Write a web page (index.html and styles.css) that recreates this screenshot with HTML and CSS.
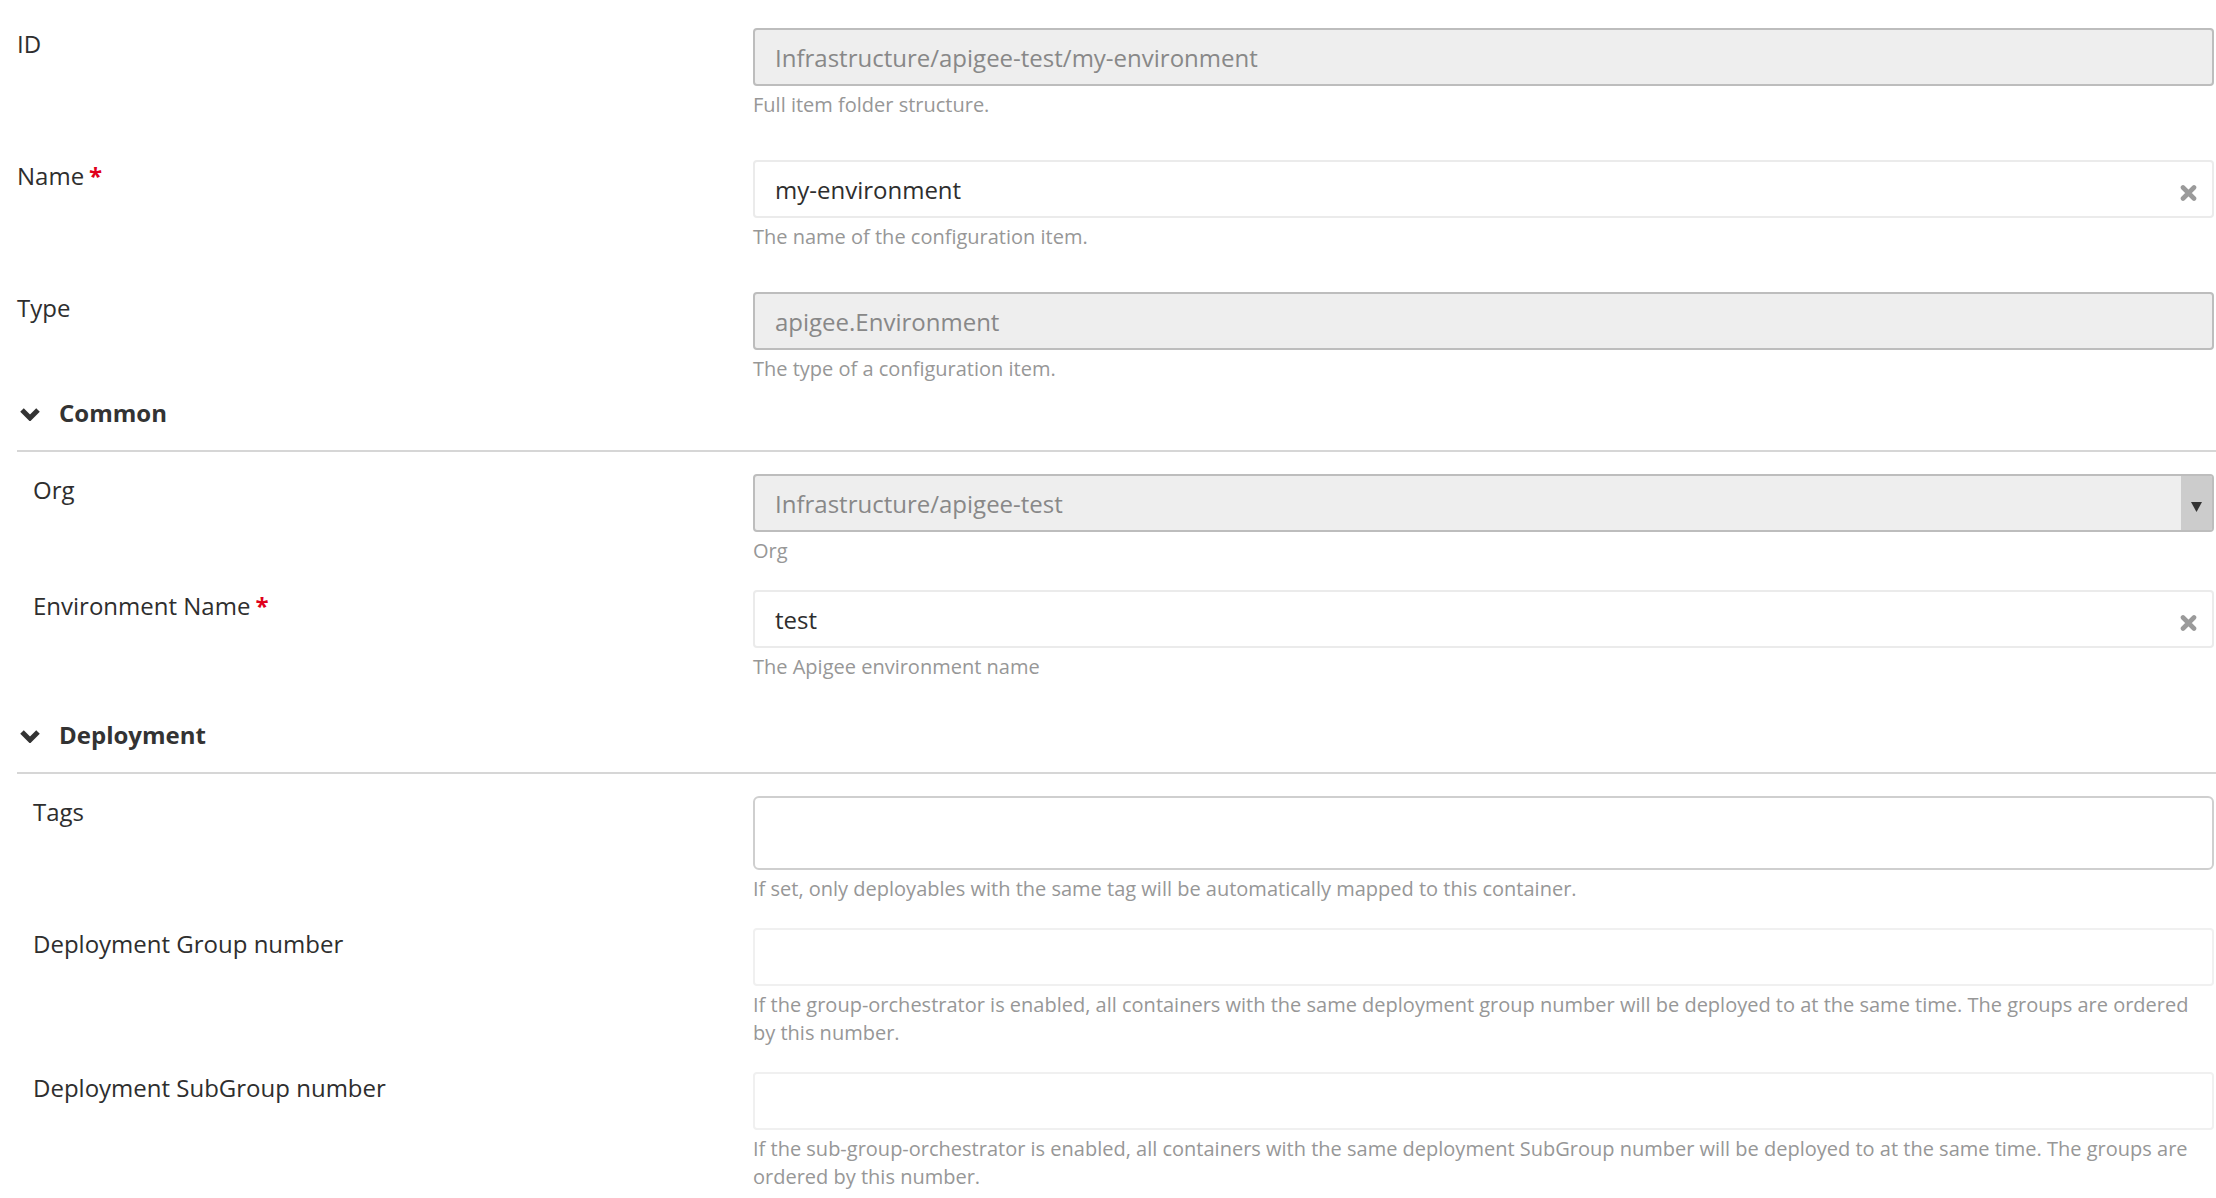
FILE: index.html
```html
<!DOCTYPE html>
<html lang="en">
<head>
    <meta charset="UTF-8">
    <meta name="viewport" content="width=device-width, initial-scale=1.0">
    <title>my-environment</title>
    <link rel="stylesheet" href="styles.css">
</head>
<body>
<form class="ci-form">
    <div class="fields top">
        <div class="field">
            <label class="field-label">ID</label>
            <div class="field-body">
                <input class="input disabled" type="text" value="Infrastructure/apigee-test/my-environment" disabled>
                <div class="help">Full item folder structure.</div>
            </div>
        </div>
        <div class="field">
            <label class="field-label">Name<span class="required">*</span></label>
            <div class="field-body">
                <div class="input-wrap">
                    <input class="input" type="text" value="my-environment">
                    <span class="clear"><svg width="17" height="16" viewBox="0 0 17 16"><path d="M3 2.5 L14 13.5 M14 2.5 L3 13.5" stroke="#9a9a9a" stroke-width="4.6" stroke-linecap="round"/></svg></span>
                </div>
                <div class="help">The name of the configuration item.</div>
            </div>
        </div>
        <div class="field">
            <label class="field-label">Type</label>
            <div class="field-body">
                <input class="input disabled" type="text" value="apigee.Environment" disabled>
                <div class="help">The type of a configuration item.</div>
            </div>
        </div>
    </div>

    <div class="section">
        <div class="section-title">
            <svg class="chevron" width="22" height="14" viewBox="0 0 22 14"><path d="M3 3 L11 11 L19 3" fill="none" stroke="#333" stroke-width="5"/></svg>
            Common
        </div>
        <div class="fields nested">
            <div class="field">
                <label class="field-label">Org</label>
                <div class="field-body">
                    <div class="select disabled">
                        <span class="select-value">Infrastructure/apigee-test</span>
                        <span class="select-arrow"><svg width="11" height="10" viewBox="0 0 11 10"><path d="M0 0 H11 L5.5 10 Z" fill="#333"/></svg></span>
                    </div>
                    <div class="help">Org</div>
                </div>
            </div>
            <div class="field">
                <label class="field-label">Environment Name<span class="required">*</span></label>
                <div class="field-body">
                    <div class="input-wrap">
                        <input class="input" type="text" value="test">
                        <span class="clear"><svg width="17" height="16" viewBox="0 0 17 16"><path d="M3 2.5 L14 13.5 M14 2.5 L3 13.5" stroke="#9a9a9a" stroke-width="4.6" stroke-linecap="round"/></svg></span>
                    </div>
                    <div class="help">The Apigee environment name</div>
                </div>
            </div>
        </div>
    </div>

    <div class="section">
        <div class="section-title">
            <svg class="chevron" width="22" height="14" viewBox="0 0 22 14"><path d="M3 3 L11 11 L19 3" fill="none" stroke="#333" stroke-width="5"/></svg>
            Deployment
        </div>
        <div class="fields nested">
            <div class="field">
                <label class="field-label">Tags</label>
                <div class="field-body">
                    <div class="tags-input"></div>
                    <div class="help">If set, only deployables with the same tag will be automatically mapped to this container.</div>
                </div>
            </div>
            <div class="field">
                <label class="field-label">Deployment Group number</label>
                <div class="field-body">
                    <input class="input light" type="text" value="">
                    <div class="help">If the group-orchestrator is enabled, all containers with the same deployment group number will be deployed to at the same time. The groups are ordered by this number.</div>
                </div>
            </div>
            <div class="field">
                <label class="field-label">Deployment SubGroup number</label>
                <div class="field-body">
                    <input class="input light" type="text" value="">
                    <div class="help">If the sub-group-orchestrator is enabled, all containers with the same deployment SubGroup number will be deployed to at the same time. The groups are ordered by this number.</div>
                </div>
            </div>
        </div>
    </div>
</form>
</body>
</html>
```

FILE: styles.css
```css
body {
    margin: 0;
    padding: 28px 2px 0 17px;
    background-color: #FFFFFF;
    font-family: "Open Sans", "Liberation Sans", sans-serif;
    color: #333333;
}
.fields {
    display: flex;
    flex-direction: column;
}
.fields.top {
    gap: 41px;
}
.fields.nested {
    gap: 25px;
    padding-top: 22px;
    padding-bottom: 24px;
}
.field {
    display: grid;
    grid-template-columns: 736px 1fr;
}
.nested .field-label {
    padding-left: 16px;
}
.field-label {
    font-size: 24px;
    line-height: 32px;
    color: #2e2e2e;
}
.required {
    color: #e0001b;
    margin-left: 5px;
    font-weight: bold;
}
.field-body {
    display: flex;
    flex-direction: column;
    min-width: 0;
}
.input {
    box-sizing: border-box;
    width: 100%;
    height: 58px;
    margin: 0;
    padding: 0 50px 0 20px;
    font-family: "Open Sans", "Liberation Sans", sans-serif;
    font-size: 24px;
    color: #2e2e2e;
    background-color: #FFFFFF;
    border: 2px solid #ebebeb;
    border-radius: 4px;
    outline: none;
}
.input.disabled {
    background-color: #eeeeee;
    border-color: #bdbdbd;
    color: #888888;
    -webkit-text-fill-color: #888888;
    opacity: 1;
}
.input.light {
    border-color: #f0f0f0;
}
.input-wrap {
    position: relative;
}
.clear {
    position: absolute;
    right: 17px;
    top: 25px;
    width: 17px;
    height: 16px;
    display: flex;
}
.select {
    box-sizing: border-box;
    height: 58px;
    display: flex;
    align-items: stretch;
    border: 2px solid #bdbdbd;
    border-radius: 4px;
    background-color: #eeeeee;
    overflow: hidden;
}
.select-value {
    flex: 1;
    display: flex;
    align-items: center;
    padding-left: 20px;
    font-size: 24px;
    color: #888888;
}
.select-arrow {
    width: 31px;
    background-color: #cccccc;
    display: flex;
    align-items: center;
    justify-content: center;
    padding-top: 8px;
    box-sizing: border-box;
}
.tags-input {
    box-sizing: border-box;
    height: 74px;
    border: 2px solid #cfcfcf;
    border-radius: 6px;
    background-color: #FFFFFF;
}
.help {
    margin-top: 5px;
    font-size: 20px;
    line-height: 28px;
    color: #979797;
}
.section {
    margin-top: 12px;
}
.section-title {
    display: flex;
    align-items: center;
    gap: 18px;
    font-size: 24px;
    font-weight: bold;
    line-height: 36px;
    color: #333333;
    padding-bottom: 19px;
    border-bottom: 2px solid #d6d6d6;
    margin-right: -2px;
}
.chevron {
    margin-left: 2px;
    margin-top: 2px;
}
```
